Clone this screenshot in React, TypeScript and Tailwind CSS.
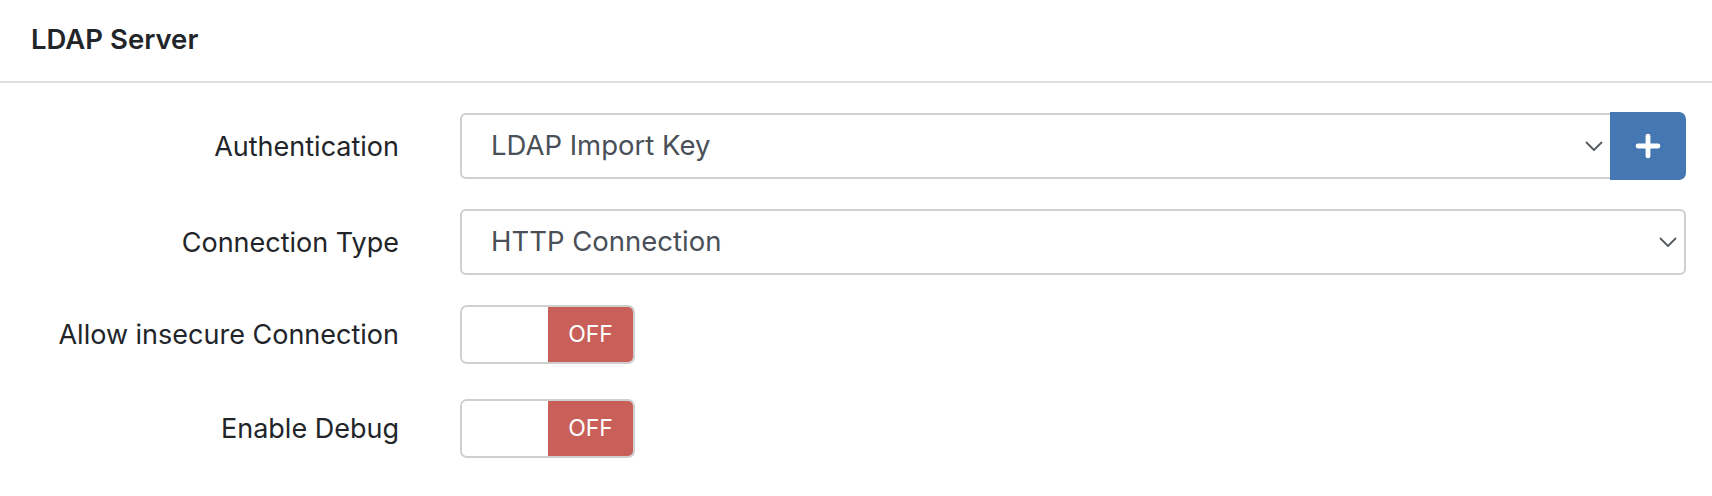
import { Plus } from 'lucide-react'

const font = { fontFamily: 'Inter, "Noto Sans", sans-serif' }

const Chevron = () => (
    <svg width="18" height="11" viewBox="0 0 18 11" className="shrink-0">
        <polyline points="1.5,1.5 9,9 16.5,1.5" fill="none" stroke="#555b61" strokeWidth="1.8" strokeLinecap="round" strokeLinejoin="round" />
    </svg>
)

const Label = ({ text }: { text: string }) => (
    <div className="w-[399px] shrink-0 text-right text-[27px] leading-none text-[#212529]">{text}</div>
)

const Toggle = () => (
    <div className="flex h-[59px] w-[175px] overflow-hidden rounded-[7px] border-2 border-[#cfcfcf]">
        <div className="w-[86px] bg-white" />
        <div className="flex flex-1 items-center justify-center bg-[#c95f59] text-[23px] text-white">OFF</div>
    </div>
)

export default function App() {
    return (
        <div className="min-h-[496px] w-full bg-white" style={font}>
            <div className="flex h-[83px] items-center border-b-2 border-[#dedede] pb-[2px] pl-[31px]">
                <h2 className="text-[27.5px] font-semibold text-[#212529]">LDAP Server</h2>
            </div>
            <div className="flex flex-col gap-[30px] pr-[26px] pt-[29px]">
                <div className="flex h-[68px] items-center">
                    <Label text="Authentication" />
                    <div className="ml-[61px] flex flex-1 items-center">
                        <div className="flex h-[66px] flex-1 items-center justify-between rounded-l-[6px] border-2 border-r-0 border-[#cfcfcf] pl-[29px] pr-[7px] text-[27.5px] text-[#495057]">
                            <span>LDAP Import Key</span>
                            <Chevron />
                        </div>
                        <button className="flex h-[68px] w-[76px] items-center justify-center rounded-r-[7px] bg-[#4577b2]">
                            <Plus size={34} color="#fff" strokeWidth={3.4} />
                        </button>
                    </div>
                </div>
                <div className="-mt-[1px] flex h-[66px] items-center">
                    <Label text="Connection Type" />
                    <div className="ml-[61px] flex h-[66px] flex-1 items-center justify-between rounded-[6px] border-2 border-[#cfcfcf] pl-[29px] pr-[7px] text-[27.5px] text-[#495057]">
                        <span>HTTP Connection</span>
                        <Chevron />
                    </div>
                </div>
                <div className="flex h-[64px] items-start">
                    <div className="flex h-[59px] items-center">
                        <Label text="Allow insecure Connection" />
                    </div>
                    <div className="ml-[61px]">
                        <Toggle />
                    </div>
                </div>
                <div className="flex h-[64px] items-start">
                    <div className="flex h-[59px] items-center">
                        <Label text="Enable Debug" />
                    </div>
                    <div className="ml-[61px]">
                        <Toggle />
                    </div>
                </div>
            </div>
        </div>
    )
}
